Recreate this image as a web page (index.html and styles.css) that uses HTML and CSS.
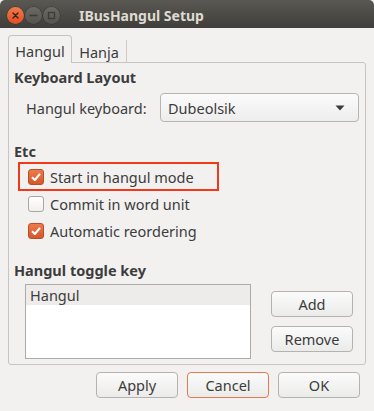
FILE: index.html
```html
<!DOCTYPE HTML>
<html lang="en">
  <head>
    <title>IBusHangul Setup</title>
    <meta charset="utf-8">
    <link rel="stylesheet" href="styles.css">
  </head>
  <body>

  <div class="window">
    <div class="titlebar">
      <span class="wbtn close">
        <svg width="17" height="17" viewBox="0 0 17 17"><path d="M6 6 L11 11 M11 6 L6 11" stroke="#3a1f14" stroke-width="1.4" stroke-linecap="round"/></svg>
      </span>
      <span class="wbtn">
        <svg width="17" height="17" viewBox="0 0 17 17"><path d="M4.5 8.5 H12.5" stroke="#3c3b37" stroke-width="1.6"/></svg>
      </span>
      <span class="wbtn">
        <svg width="17" height="17" viewBox="0 0 17 17"><rect x="5.5" y="5.5" width="6" height="6" fill="none" stroke="#3c3b37" stroke-width="1.3"/></svg>
      </span>
      <span class="wtitle">IBusHangul Setup</span>
    </div>

    <div class="main">
      <div class="tabs">
        <div class="tab active">Hangul</div>
        <div class="tab">Hanja</div>
      </div>

      <div class="notebook">
        <div class="heading">Keyboard Layout</div>
        <div class="combo-row">
          <span class="label">Hangul keyboard:</span>
          <div class="combo">
            <span>Dubeolsik</span>
            <svg width="10" height="6" viewBox="0 0 10 6"><path d="M0.5 0.5 H9.5 L5 5.5 Z" fill="#3c3c3c"/></svg>
          </div>
        </div>

        <div class="heading etc">Etc</div>
        <div class="check-row marked">
          <span class="check on"><svg width="12" height="12" viewBox="0 0 12 12"><path d="M2 6.3 L4.8 9 L10 2.8" fill="none" stroke="#fff" stroke-width="2.1" stroke-linejoin="round"/></svg></span>
          <span>Start in hangul mode</span>
        </div>
        <div class="check-row">
          <span class="check"></span>
          <span>Commit in word unit</span>
        </div>
        <div class="check-row">
          <span class="check on"><svg width="12" height="12" viewBox="0 0 12 12"><path d="M2 6.3 L4.8 9 L10 2.8" fill="none" stroke="#fff" stroke-width="2.1" stroke-linejoin="round"/></svg></span>
          <span>Automatic reordering</span>
        </div>

        <div class="heading toggle">Hangul toggle key</div>
        <div class="list-row">
          <div class="listbox">
            <div class="item">Hangul</div>
          </div>
          <div class="side-buttons">
            <button class="btn">Add</button>
            <button class="btn">Remove</button>
          </div>
        </div>
      </div>

      <div class="actions">
        <button class="btn">Apply</button>
        <button class="btn default">Cancel</button>
        <button class="btn">OK</button>
      </div>
    </div>
  </div>

  </body>
</html>
```

FILE: styles.css
```css
html {
  height: 100%;
}
body {
  margin: 0;
  padding: 0;
  background: #f2f1f0;
  color: #3c3c3c;
  font-family: "Noto Sans", "DejaVu Sans", sans-serif;
  font-size: 14.5px;
  height: 100%;
}
.window {
  width: 374px;
  height: 411px;
  display: flex;
  flex-direction: column;
}
.titlebar {
  height: 28px;
  display: flex;
  align-items: center;
  padding-left: 7px;
  gap: 1px;
  background: linear-gradient(#5a5852, #3f3e3a);
  border-radius: 5px 5px 0 0;
  box-sizing: border-box;
}
.wbtn {
  width: 17px;
  height: 17px;
  border-radius: 50%;
  background: linear-gradient(#6b6a65, #54534e);
  box-shadow: 0 0 0 0.5px #2f2e2b;
  display: flex;
  margin-top: 2px;
}
.wbtn.close {
  background: linear-gradient(#f37a4c, #df4f22);
}
.wtitle {
  margin-left: 18px;
  color: #dfdbd2;
  font-weight: bold;
  font-size: 14px;
  margin-top: 2px;
}
.main {
  padding: 7px 8px 0 8px;
  flex: 1;
  display: flex;
  flex-direction: column;
}
.tabs {
  display: flex;
  align-items: flex-end;
  height: 27px;
}
.tab {
  height: 22px;
  width: 55px;
  box-sizing: border-box;
  border-right: 1px solid #cfccc8;
  display: flex;
  align-items: center;
  justify-content: center;
  padding-top: 2px;
}
.tab.active {
  width: 64px;
  height: 28px;
  border: 1px solid #c6c3be;
  border-bottom: none;
  border-radius: 4px 4px 0 0;
  background: #f2f1f0;
  position: relative;
  z-index: 1;
  margin-bottom: -1px;
  padding-top: 3px;
}
.notebook {
  height: 303px;
  box-sizing: border-box;
  border: 1px solid #c8c5c1;
  border-radius: 0 3px 3px 3px;
  padding: 4px 6px 0 5px;
}
.heading {
  font-weight: bold;
  line-height: 20px;
}
.combo-row {
  display: flex;
  align-items: center;
  margin-top: 6px;
}
.label {
  margin-left: 12px;
}
.combo {
  margin-left: auto;
  width: 199px;
  height: 29px;
  box-sizing: border-box;
  border: 1px solid #b8b5b0;
  border-radius: 4px;
  background: linear-gradient(#fbfbfb, #ededed);
  display: flex;
  align-items: center;
  justify-content: space-between;
  padding: 0 13px 0 7px;
}
.heading.etc {
  margin-top: 19px;
}
.check-row {
  display: flex;
  align-items: center;
  gap: 6px;
  height: 29px;
  box-sizing: border-box;
  width: 201px;
  margin-left: 4px;
  margin-bottom: -2px;
  border: 2px solid transparent;
  padding-left: 8px;
}
.check-row.marked {
  border-color: #f0391b;
  margin-top: 1px;
}
.check {
  width: 16px;
  height: 16px;
  box-sizing: border-box;
  border-radius: 3px;
  border: 1px solid #aaa7a2;
  background: linear-gradient(#ffffff, #f1f0ee);
  display: flex;
  align-items: center;
  justify-content: center;
}
.check.on {
  border-color: #b4512a;
  background: linear-gradient(#ee7a4b, #d4582a);
}
.heading.toggle {
  margin-top: 17px;
}
.list-row {
  display: flex;
  margin-top: 4px;
}
.listbox {
  margin-left: 11px;
  width: 226px;
  height: 75px;
  box-sizing: border-box;
  border: 1px solid #aeaba6;
  background: #ffffff;
}
.item {
  height: 20px;
  line-height: 20px;
  padding-left: 4px;
  background: #edeceb;
}
.side-buttons {
  display: flex;
  flex-direction: column;
  gap: 9px;
  margin-left: 20px;
  padding-top: 7px;
}
.btn {
  width: 82px;
  height: 26px;
  box-sizing: border-box;
  border: 1px solid #b6b3ae;
  border-radius: 4px;
  background: linear-gradient(#fbfbfb, #ebebea);
  color: #3c3c3c;
  font-family: "Noto Sans", "DejaVu Sans", sans-serif;
  font-size: 14.5px;
  padding: 0;
}
.btn.default {
  border-color: #e07a50;
}
.actions {
  display: flex;
  justify-content: flex-end;
  gap: 9px;
  margin-top: 7px;
  padding-right: 6px;
}
```
